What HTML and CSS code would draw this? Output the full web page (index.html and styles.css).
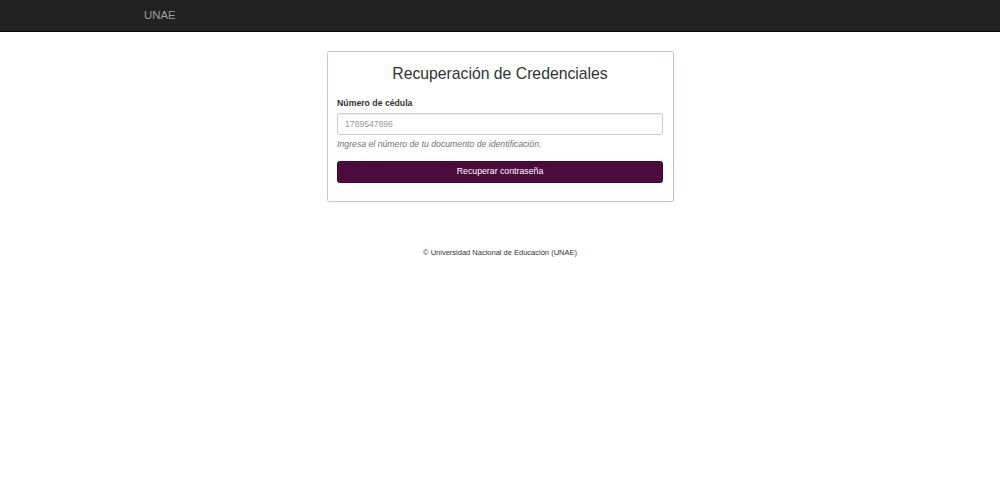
FILE: index.html
```html
<!DOCTYPE html>
<html lang="es">
<head>
<meta charset="utf-8">
<title>Recuperación de Credenciales - UNAE</title>
<link rel="stylesheet" href="styles.css">
</head>
<body>
<nav class="navbar">
  <div class="navbar-inner">
    <a class="brand" href="#">UNAE</a>
  </div>
</nav>
<main class="main">
  <section class="card">
    <h3 class="card-title">Recuperación de Credenciales</h3>
    <form class="form">
      <div class="form-group">
        <label class="label" for="cedula">Número de cédula</label>
        <input class="input" id="cedula" type="text" placeholder="1789547896">
        <p class="help">Ingresa el número de tu documento de identificación.</p>
      </div>
      <button class="btn" type="button">Recuperar contraseña</button>
    </form>
  </section>
  <footer class="footer">© Universidad Nacional de Educación (UNAE)</footer>
</main>
</body>
</html>
```
FILE: styles.css
```css
* { box-sizing: border-box; }
html, body {
  margin: 0;
  padding: 0;
  background: #fff;
  font-family: "Liberation Sans", Arial, Helvetica, sans-serif;
  font-size: 8.7px;
  line-height: 12.8px;
  color: #333;
}
.navbar {
  height: 32px;
  background: #222;
  border-bottom: 1px solid #080808;
}
.navbar-inner {
  width: 749px;
  margin: 0 auto;
  display: flex;
  align-items: center;
  height: 31px;
  padding-left: 18.5px;
}
.brand {
  font-size: 11.4px;
  line-height: 12.8px;
  color: #9d9d9d;
  text-decoration: none;
}
.main {
  display: flex;
  flex-direction: column;
  align-items: center;
  padding-top: 19px;
}
.card {
  width: 347px;
  border: 1px solid #d3bfcf;
  border-radius: 2.5px;
  padding: 0 9.6px 18.2px;
}
.card-title {
  margin: 13.2px 0 14.9px;
  font-size: 15.75px;
  font-weight: 400;
  line-height: 17px;
  text-align: center;
  color: #333;
}
.form { margin: 0; }
.form-group {
  display: flex;
  flex-direction: column;
  margin-bottom: 9.8px;
}
.label {
  font-weight: 700;
  font-size: 8.7px;
  margin-bottom: 3.2px;
  color: #333;
}
.input {
  height: 21.76px;
  padding: 3.84px 7px;
  border: 1px solid #ccc;
  border-radius: 2.56px;
  font-family: inherit;
  font-size: 8.6px;
  color: #555;
  background: #fff;
  box-shadow: inset 0 1px 1px rgba(0,0,0,.075);
}
.input::placeholder { color: #999; }
.help {
  margin: 3.4px 0 0;
  font-style: italic;
  font-size: 8.7px;
  color: #737373;
}
.btn {
  display: block;
  width: 100%;
  height: 21.76px;
  padding: 0 7.68px;
  border: 1px solid #3f0832;
  border-radius: 2.56px;
  background: #4d0a3d;
  color: #fff;
  font-family: inherit;
  font-size: 8.75px;
  line-height: 1;
  cursor: pointer;
}
.footer {
  margin-top: 45px;
  font-size: 7.5px;
  color: #333;
  text-align: center;
}
```
